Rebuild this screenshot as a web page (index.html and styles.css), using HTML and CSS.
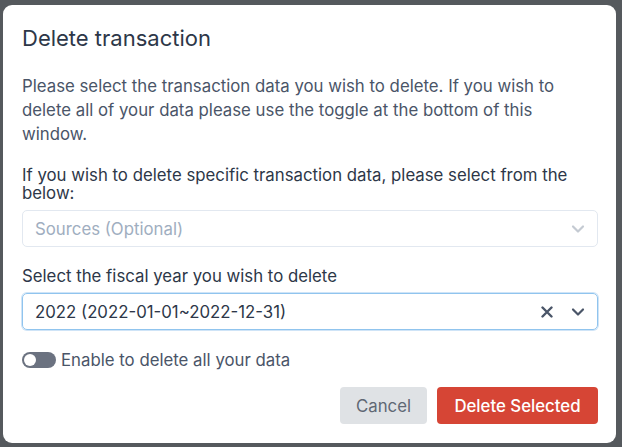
FILE: index.html
```html
<!DOCTYPE html>
<html>
<head>
<meta charset="utf-8">
<link rel="stylesheet" href="styles.css">
</head>
<body>
<div class="backdrop">
  <div class="modal">
    <h2 class="title">Delete transaction</h2>
    <p class="intro">Please select the transaction data you wish to delete. If you wish to delete all of your data please use the toggle at the bottom of this window.</p>
    <label class="label label-tight">If you wish to delete specific transaction data, please select from the below:</label>
    <div class="select">
      <span class="placeholder">Sources (Optional)</span>
      <span class="icons">
        <svg class="chev light" width="14" height="14" viewBox="0 0 14 14"><path d="M2 4.5 L7 9.5 L12 4.5" fill="none" stroke="currentColor" stroke-width="2.2" stroke-linecap="round" stroke-linejoin="round"/></svg>
      </span>
    </div>
    <label class="label label-year">Select the fiscal year you wish to delete</label>
    <div class="select focused">
      <span class="value">2022 (2022-01-01~2022-12-31)</span>
      <span class="icons">
        <svg class="clear" width="12" height="12" viewBox="0 0 12 12"><path d="M1.5 1.5 L10.5 10.5 M10.5 1.5 L1.5 10.5" fill="none" stroke="currentColor" stroke-width="2.4" stroke-linecap="round"/></svg>
        <svg class="chev dark" width="14" height="14" viewBox="0 0 14 14"><path d="M2 4.5 L7 9.5 L12 4.5" fill="none" stroke="currentColor" stroke-width="2.2" stroke-linecap="round" stroke-linejoin="round"/></svg>
      </span>
    </div>
    <div class="toggle-row">
      <span class="toggle"><span class="knob"></span></span>
      <span class="toggle-text">Enable to delete all your data</span>
    </div>
    <div class="actions">
      <button class="btn btn-cancel">Cancel</button>
      <button class="btn btn-delete">Delete Selected</button>
    </div>
  </div>
</div>
</body>
</html>
```
FILE: styles.css
```css
* { box-sizing: border-box; }
html, body { margin: 0; padding: 0; }
body {
  background: #55595d;
  font-family: Inter, "Noto Sans", sans-serif;
  width: 622px;
  height: 447px;
  overflow: hidden;
}
.backdrop {
  padding: 5px 6px 4px 3px;
}
.modal {
  background: #ffffff;
  border-radius: 9px;
  width: 613px;
  height: 438px;
  padding: 20px 18px 0 19px;
  display: flex;
  flex-direction: column;
}
.title {
  margin: 0;
  font-size: 22px;
  line-height: 26px;
  font-weight: 400;
  color: #2d3748;
  letter-spacing: 0;
}
.intro {
  margin: 23px 0 0;
  font-size: 16.8px;
  line-height: 24px;
  color: #4a5568;
  letter-spacing: 0;
}
.label {
  display: block;
  font-size: 16.8px;
  color: #2d3748;
}
.label-tight {
  margin-top: 20px;
  line-height: 18px;
}
.label-year {
  margin-top: 17px;
  line-height: 24px;
}
.select {
  margin-top: 8px;
  height: 37px;
  border: 1px solid #e2e8f0;
  border-radius: 5px;
  display: flex;
  align-items: center;
  justify-content: space-between;
  padding: 0 12px 0 12px;
  font-size: 16.8px;
}
.select.focused {
  margin-top: 5px;
  border-color: #90c4ee;
  box-shadow: 0 0 0 1px #cfe4f7;
}
.placeholder { color: #a0aec0; }
.value { color: #2d3748; }
.icons {
  display: flex;
  align-items: center;
  gap: 18px;
}
.chev { display: block; }
.chev.light { color: #c4cad2; }
.chev.dark { color: #4a5568; }
.clear { display: block; color: #4a5568; }
.toggle-row {
  margin-top: 20px;
  display: flex;
  align-items: center;
  gap: 5px;
}
.toggle {
  width: 34px;
  height: 16px;
  background: #6b7280;
  border-radius: 8px;
  position: relative;
  flex: none;
}
.knob {
  position: absolute;
  left: 2px;
  top: 2px;
  width: 12px;
  height: 12px;
  border-radius: 50%;
  background: #ffffff;
}
.toggle-text {
  font-size: 16.8px;
  color: #4a5568;
}
.actions {
  margin-top: 17px;
  display: flex;
  justify-content: flex-end;
  gap: 10px;
}
.btn {
  height: 37px;
  border: none;
  border-radius: 4px;
  font-family: inherit;
  font-size: 16.8px;
  padding: 0;
}
.btn-cancel {
  background: #dfe2e5;
  color: #5f6874;
  width: 87px;
}
.btn-delete {
  background: #d64535;
  color: #ffffff;
  font-weight: 500;
  width: 161px;
}
```
